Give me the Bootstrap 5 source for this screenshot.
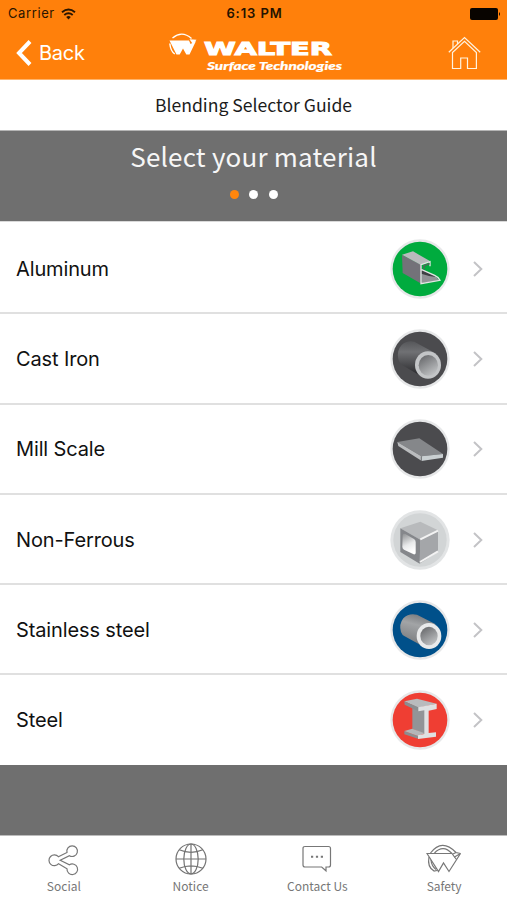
<!DOCTYPE html>
<html lang="en">
<head>
<meta charset="utf-8">
<meta name="viewport" content="width=device-width, initial-scale=1">
<title>Blending Selector Guide</title>
<link href="https://cdn.jsdelivr.net/npm/bootstrap@5.3.0/dist/css/bootstrap.min.css" rel="stylesheet">
<style>
body{font-family:"Noto Sans CJK SC","Noto Sans",sans-serif;background:#6f6f6f;height:900px;overflow:hidden}
svg{display:block;flex:none}
.ios{font-family:Inter,"Liberation Sans",sans-serif}
.app-header{background:#ff800b;height:80px;border-bottom:1px solid #ffb46b;color:#fff}
.status-line{height:27px;font-size:13px;color:#2a1500;padding:0 6px 0 8px}
.status-line>*{flex:1 1 0}
.carrier{gap:6px;letter-spacing:.6px}
.clock{font-weight:600;letter-spacing:.9px;color:#241200}
.nav-line{height:51px;padding:0 26px 0 16px}
.back-link{color:#fff;font-size:20px;width:152px;gap:7px}
.back-link span{letter-spacing:-.25px}
.page-title{height:51px;font-size:17.6px;color:#1c1c1c;border-bottom:1px solid #b5b5b5;letter-spacing:0}
.step-panel{height:90px;background:#6f6f6f;color:#f6f6f6}
.step-title{font-size:26px;line-height:40px;margin-top:5px;letter-spacing:.2px}
.step-dots{gap:10.5px;margin-top:14px}
.step-dots i{width:9px;height:9px;border-radius:50%;background:#fff}
.step-dots i.on{background:#ff860d}
.materials{padding-top:2px;background:#fff;border-top:1px solid #d9d9d9}
.materials .list-group-item{height:90.3px;padding:1px 24px 0 16px;border:0;border-bottom:2px solid #e0e0e0;font-size:20px;color:#111;letter-spacing:-.13px;background:#fff}
.materials .list-group-item:last-child{border-color:#bdbdbd;height:90px;padding-top:0}
.chev{margin-left:23px}
.tabs{height:65px;border-top:1px solid #bcbcbc;background:#fff;color:#777;font-size:12px}
.tabs a{color:#777;text-decoration:none;padding:7px 0 0 1px}
.tabs span{line-height:18px;margin-top:0}
</style>
</head>
<body class="d-flex flex-column">
<svg width="0" height="0" class="position-absolute">
<defs>
<linearGradient id="tubeDark" x1="0" y1="0" x2="0" y2="1"><stop offset="0" stop-color="#555659"/><stop offset=".3" stop-color="#707174"/><stop offset="1" stop-color="#252528"/></linearGradient>
<linearGradient id="tubeLight" x1="0.6" y1="0" x2=".3" y2="1"><stop offset="0" stop-color="#77797c"/><stop offset=".35" stop-color="#a2a4a6"/><stop offset="1" stop-color="#77797c"/></linearGradient>
<linearGradient id="bore" x1="0" y1="0" x2=".6" y2="1"><stop offset="0" stop-color="#5f6063"/><stop offset="1" stop-color="#bcbec0"/></linearGradient>
<linearGradient id="hole" x1="0" y1="0" x2=".3" y2="1"><stop offset="0" stop-color="#8d8f91"/><stop offset=".6" stop-color="#e8e9ea"/><stop offset="1" stop-color="#fff"/></linearGradient>
<symbol id="chev" viewBox="0 0 10 18"><path d="M1 2l7.3 7L1 16" fill="none" stroke="#c3c3c6" stroke-width="2"/></symbol>
</defs>
</svg>
<header class="app-header ios">
<div class="status-line d-flex align-items-center">
<div class="carrier d-flex align-items-center"><span>Carrier</span>
<svg width="15" height="12" viewBox="0 0 15 12" fill="none" stroke="#2a1500" stroke-width="1.9"><path d="M1 4.3q6.5-5.4 13 0M3.3 7q4.200-3.500 8.400 0"/><path d="M5.2 9q2.3-1.8 4.6 0L7.5 11.4z" fill="#2a1500" stroke="none"/></svg></div>
<div class="clock text-center">6:13 PM</div>
<div class="d-flex justify-content-end"><svg width="31" height="12" viewBox="0 0 31 12"><rect width="28" height="12" rx="2" fill="#080400"/><path d="M29 4q2 2 0 4z" fill="#080400"/></svg></div>
</div>
<div class="nav-line d-flex align-items-center">
<a href="#" class="back-link d-flex align-items-center text-decoration-none"><svg width="16" height="26" viewBox="0 0 16 26"><path d="M14 1.5L3 13l11 11.5" fill="none" stroke="#fff" stroke-width="4"/></svg><span>Back</span></a>
<svg width="176" height="42" viewBox="168 32 176 42" fill="#fff" role="img" aria-label="Walter Surface Technologies">
<path d="M169.500 40.500h19.500l1.500 3.500 5.500-3-6.500 13.500h-3.200l-3.300-6-3.300 6h-3.200z"/><path d="M172.500 38q9.500-8 19 .5M169.800 43.500q.7 7.500 5 10.500" fill="none" stroke="#fff" stroke-width="1.400"/><path d="M189.500 39.300l7 .4-3.500 4.500z"/>
<text x="204" y="54.500" font-family="'DejaVu Sans'" font-weight="700" font-size="18.500" textLength="128" lengthAdjust="spacingAndGlyphs" stroke="#fff" stroke-width="1">WALTER</text>
<text x="207" y="69.500" font-family="Lato,sans-serif" font-weight="900" font-style="italic" font-size="11" textLength="135" lengthAdjust="spacingAndGlyphs" stroke="#fff" stroke-width=".2">Surface Technologies</text>
</svg>
<svg class="ms-auto" width="33" height="34" viewBox="0 0 33 34" fill="none" stroke="#fff3df" stroke-width="1.2"><path d="M.8 16.2L16.5 1.5 32.2 16.2M4.5 16.6V32.5h8.2V22h6.8v10.5h8.9V16.6L16.5 5.4z"/><path d="M5 12V5h4.5v3"/></svg>
</div>
</header>
<div class="page-title bg-white d-flex align-items-center justify-content-center"><span>Blending Selector Guide</span></div>
<section class="step-panel text-center d-flex flex-column">
<div class="step-title">Select your material</div>
<div class="step-dots d-flex justify-content-center"><i class="on"></i><i></i><i></i></div>
</section>
<div class="materials list-group list-group-flush ios">
<a href="#" class="list-group-item d-flex align-items-center"><span class="me-auto">Aluminum</span>
<svg width="60" height="60" viewBox="30 40 180 180"><circle cx="120" cy="130" r="89" fill="#e7e8e9"/><circle cx="120" cy="130" r="82" fill="#00ab3e"/><path d="M66 88l58 29v57l-56-32z" fill="#737279"/><path d="M66 87l33-10 52 30-28 11z" fill="#b9babd"/><path d="M124 134q34 8 54 30l-54 9z" fill="#929397"/><path d="M124 130l44 24q-22-2-44-10z" fill="#3f4044"/><path d="M150 122v-14l-27 9v57l57-10q-4-10-16-15l-39-17" fill="none" stroke="#e4e5e5" stroke-width="4"/><path d="M132 131v-11l17-6" fill="none" stroke="#5b5c60" stroke-width="4"/></svg>
<svg class="chev" width="10" height="18"><use href="#chev"/></svg></a>
<a href="#" class="list-group-item d-flex align-items-center"><span class="me-auto">Cast Iron</span>
<svg width="60" height="60" viewBox="30 40 180 180"><circle cx="120" cy="130" r="89" fill="#e7e8e9"/><circle cx="120" cy="130" r="82" fill="#4b4b4e"/><path d="M103 78Q81 73 65 88q-16 17-10 43 2 11 10 16l61 36 43-69z" fill="url(#tubeDark)"/><ellipse cx="144" cy="148" rx="39" ry="41" fill="#c3c5c7"/><ellipse cx="145" cy="149" rx="29" ry="31" fill="url(#bore)"/></svg>
<svg class="chev" width="10" height="18"><use href="#chev"/></svg></a>
<a href="#" class="list-group-item d-flex align-items-center"><span class="me-auto">Mill Scale</span>
<svg width="60" height="60" viewBox="30 40 180 180"><circle cx="120" cy="130" r="89" fill="#e7e8e9"/><circle cx="120" cy="130" r="82" fill="#4b4b4e"/><path d="M52 109l66-11 71 47-65 7z" fill="#85878a"/><path d="M52 109l72 43v13l-69-44z" fill="#babcbe"/><path d="M124 152l65-7v11l-65 10z" fill="#c9cfd1"/><path d="M124 152v14" stroke="#56575a" stroke-width="2"/></svg>
<svg class="chev" width="10" height="18"><use href="#chev"/></svg></a>
<a href="#" class="list-group-item d-flex align-items-center"><span class="me-auto">Non-Ferrous</span>
<svg width="60" height="60" viewBox="30 40 180 180"><circle cx="120" cy="130" r="89" fill="#e2e4e5"/><circle cx="120" cy="130" r="80" fill="#d2d5d6"/><path d="M61 95l60-20 53 26-53 28z" fill="#b8babc"/><path d="M121 129l53-28v64l-55 36z" fill="#a4a6a9"/><path d="M61 95l60 34-2 72-58-35z" fill="#85878b"/><path d="M68 115q2-6 8-3l26 15q5 3 5 9v34q-1 4-6 3l-29-14q-5-3-5-9z" fill="url(#hole)"/><path d="M121 128l53-26M120 196l54-32" stroke="#f3f3f3" stroke-width="6"/></svg>
<svg class="chev" width="10" height="18"><use href="#chev"/></svg></a>
<a href="#" class="list-group-item d-flex align-items-center"><span class="me-auto">Stainless steel</span>
<svg width="60" height="60" viewBox="30 40 180 180"><circle cx="120" cy="130" r="89" fill="#e7e8e9"/><circle cx="120" cy="130" r="82" fill="#00508a"/><path d="M111 84Q86 78 70 95q-14 18-7 41 3 9 11 13l49 27 44-63z" fill="url(#tubeLight)"/><ellipse cx="147" cy="148" rx="37" ry="39" fill="#e9eaeb"/><ellipse cx="147" cy="148" rx="26" ry="28" fill="url(#bore)"/></svg>
<svg class="chev" width="10" height="18"><use href="#chev"/></svg></a>
<a href="#" class="list-group-item d-flex align-items-center"><span class="me-auto">Steel</span>
<svg width="60" height="60" viewBox="30 40 180 180"><circle cx="120" cy="130" r="89" fill="#e7e8e9"/><circle cx="120" cy="130" r="82" fill="#ef3e33"/><path d="M97 86l39 8v79l-39-17z" fill="#929497"/><path d="M73 74l38-8 59 15-55 12z" fill="#b9bbbd"/><path d="M73 74l42 18v12L74 84zM73 163l41 15v8l-41-13z" fill="#8b8d90"/><path d="M73 163l24-7 37 14-20 8z" fill="#b4b6b8"/><path d="M115 92l55-11v16l-24 5v67l22-2v13l-54 7v-11l19-4v-71l-18 3z" fill="#dfe1e2"/></svg>
<svg class="chev" width="10" height="18"><use href="#chev"/></svg></a>
</div>
<nav class="tabs row g-0 mt-auto">
<a href="#" class="col d-flex flex-column align-items-center"><svg width="34" height="34" viewBox="0 0 34 34" fill="none" stroke="#777" stroke-width="1.2"><path d="M11.4 13.700l8.600-4.200a5.300 5.300 0 1 1 2.400 3.200L13.200 17.200l9.200 4.600a5.300 5.300 0 1 1-2.400 4L11.600 20.700a5.400 5.400 0 1 1-.2-7z"/></svg><span>Social</span></a>
<a href="#" class="col d-flex flex-column align-items-center"><svg width="34" height="34" viewBox="0 0 34 34" fill="none" stroke="#737373" stroke-width="1.2"><circle cx="17" cy="16" r="15"/><ellipse cx="17" cy="16" rx="7.200" ry="15"/><path d="M17 1v30M2 16h30M5.200 6.800Q17 11.800 28.800 6.800M5.200 25.300Q17 20.300 28.800 25.300"/></svg><span>Notice</span></a>
<a href="#" class="col d-flex flex-column align-items-center"><svg width="34" height="34" viewBox="0 0 34 34" fill="none" stroke="#777" stroke-width="1.2"><path d="M5 3.500h23.500q2 0 2 2v16.500q0 2-2 2h-2.500v3.800l-4.300-3.800H5q-2 0-2-2V5.500q0-2 2-2z"/><path d="M11 13.700h2.200M15.900 13.700h2.200M20.800 13.700H23" stroke-width="2"/></svg><span>Contact Us</span></a>
<a href="#" class="col d-flex flex-column align-items-center"><svg width="36" height="34" viewBox="0 0 36 34" fill="none" stroke="#777" stroke-width="1.200"><path d="M1 10.500h25l2.500 3.500 6-3.500-11.500 18-5.500-8.500-5 8.500z"/><path d="M4.500 10Q16-5 30 9.500l4.500 1M8.500 10Q17 1 26 10.500M30 9.500l-3 1.500M28.500 14l2 2.500M3 14q-2 10 5 14l3-.5M5 17q.5 6 5 9.500"/></svg><span>Safety</span></a>
</nav>
<script src="https://cdn.jsdelivr.net/npm/bootstrap@5.3.0/dist/js/bootstrap.bundle.min.js"></script>
</body>
</html>
